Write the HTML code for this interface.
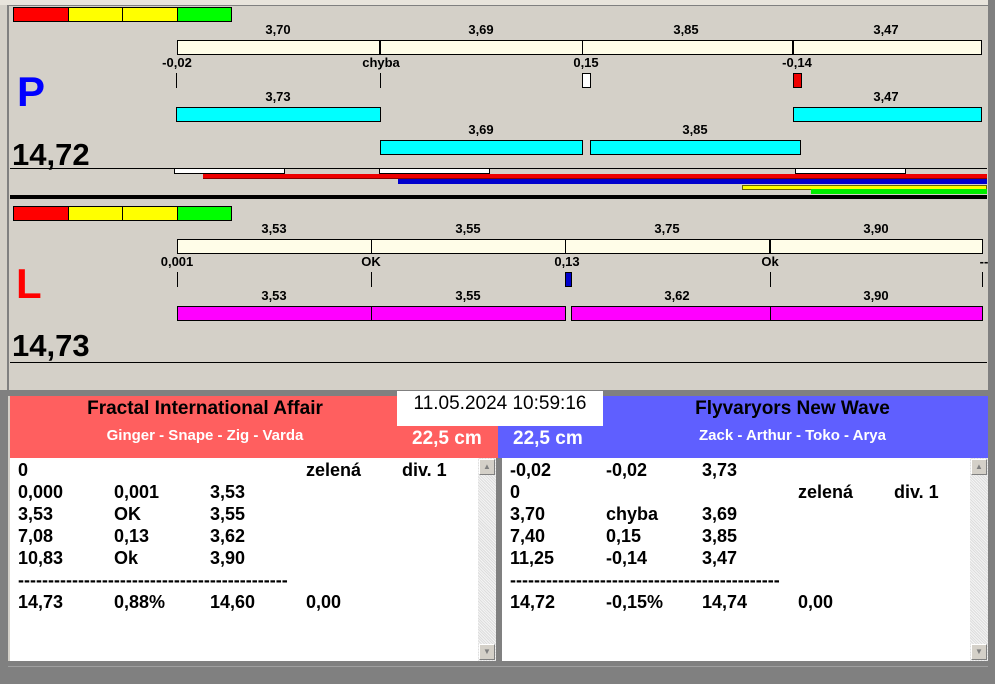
<!DOCTYPE html>
<html><head><meta charset="utf-8">
<style>
*{margin:0;padding:0;box-sizing:border-box}
body{width:995px;height:684px;position:relative;overflow:hidden;background:#d4d0c8;font-family:"Liberation Sans",Arial,sans-serif;font-weight:bold}
.a{position:absolute}
.b{position:absolute;border:1px solid #000}
.t{position:absolute;font-size:13px;color:#000;transform:translateX(-50%);white-space:nowrap;line-height:14px}
.lst{position:absolute;background:#fff;font-size:18px;line-height:22px;color:#000}
.lst div{position:absolute;white-space:nowrap}
.sb{position:absolute;width:18px;background:#e8e8e8;background-image:repeating-linear-gradient(45deg,#ddd 0 1px,#f4f4f4 1px 2px)}
.sbt{position:absolute;left:1px;width:16px;height:16px;background:#d4d0c8;border:1px solid;border-color:#fff #808080 #808080 #fff;font-size:8px;color:#808080;text-align:center;line-height:14px}
</style></head><body>
<div class="a" style="left:0;top:0;width:995px;height:5px;background:#e8e4dc"></div>
<div class="a" style="left:7px;top:5px;width:2px;height:385px;background:#808080"></div>
<div class="a" style="left:7px;top:5px;width:981px;height:1px;background:#808080"></div>
<div class="a" style="left:988px;top:0;width:7px;height:684px;background:#808080"></div>

<div class="b" style="left:13px;top:7px;width:56px;height:15px;background:#f00"></div>
<div class="b" style="left:68px;top:7px;width:55px;height:15px;background:#ff0"></div>
<div class="b" style="left:122px;top:7px;width:56px;height:15px;background:#ff0"></div>
<div class="b" style="left:177px;top:7px;width:55px;height:15px;background:#0f0"></div>

<div class="t" style="left:278px;top:23px">3,70</div>
<div class="t" style="left:481px;top:23px">3,69</div>
<div class="t" style="left:686px;top:23px">3,85</div>
<div class="t" style="left:886px;top:23px">3,47</div>
<div class="b" style="left:177px;top:40px;width:805px;height:15px;background:#fffde8"></div>
<div class="a" style="left:379px;top:40px;width:2px;height:15px;background:#000"></div>
<div class="a" style="left:582px;top:40px;width:1px;height:15px;background:#000"></div>
<div class="a" style="left:792px;top:40px;width:2px;height:15px;background:#000"></div>
<div class="t" style="left:177px;top:56px">-0,02</div>
<div class="t" style="left:381px;top:56px">chyba</div>
<div class="t" style="left:586px;top:56px">0,15</div>
<div class="t" style="left:797px;top:56px">-0,14</div>
<div class="a" style="left:176px;top:73px;width:1px;height:15px;background:#000"></div>
<div class="a" style="left:380px;top:73px;width:1px;height:15px;background:#000"></div>
<div class="b" style="left:582px;top:73px;width:9px;height:15px;background:#fff"></div>
<div class="b" style="left:793px;top:73px;width:9px;height:15px;background:#e00"></div>
<div class="t" style="left:278px;top:90px">3,73</div>
<div class="t" style="left:886px;top:90px">3,47</div>
<div class="b" style="left:176px;top:107px;width:205px;height:15px;background:#0ff"></div>
<div class="b" style="left:793px;top:107px;width:189px;height:15px;background:#0ff"></div>
<div class="t" style="left:481px;top:123px">3,69</div>
<div class="t" style="left:695px;top:123px">3,85</div>
<div class="b" style="left:380px;top:140px;width:203px;height:15px;background:#0ff"></div>
<div class="b" style="left:590px;top:140px;width:211px;height:15px;background:#0ff"></div>
<div class="a" style="left:17px;top:70px;font-size:42px;line-height:44px;color:#00f">P</div>
<div class="a" style="left:12px;top:138px;font-size:31px;line-height:34px;color:#000">14,72</div>
<div class="a" style="left:10px;top:168px;width:977px;height:1px;background:#000"></div>
<div class="b" style="left:174px;top:168px;width:111px;height:6px;background:#fff"></div>
<div class="b" style="left:379px;top:168px;width:111px;height:6px;background:#fff"></div>
<div class="b" style="left:795px;top:168px;width:111px;height:6px;background:#fff"></div>
<div class="a" style="left:203px;top:174px;width:784px;height:5px;background:#e00;border-bottom:1px solid #800"></div>
<div class="a" style="left:398px;top:179px;width:589px;height:5px;background:#00c"></div>
<div class="a" style="left:742px;top:185px;width:245px;height:5px;background:#ff0;border:1px solid #660"></div>
<div class="a" style="left:811px;top:189px;width:176px;height:5px;background:#0e0"></div>
<div class="a" style="left:10px;top:195px;width:977px;height:4px;background:#000"></div>

<div class="b" style="left:13px;top:206px;width:56px;height:15px;background:#f00"></div>
<div class="b" style="left:68px;top:206px;width:55px;height:15px;background:#ff0"></div>
<div class="b" style="left:122px;top:206px;width:56px;height:15px;background:#ff0"></div>
<div class="b" style="left:177px;top:206px;width:55px;height:15px;background:#0f0"></div>
<div class="t" style="left:274px;top:222px">3,53</div>
<div class="t" style="left:468px;top:222px">3,55</div>
<div class="t" style="left:667px;top:222px">3,75</div>
<div class="t" style="left:876px;top:222px">3,90</div>
<div class="b" style="left:177px;top:239px;width:806px;height:15px;background:#fffde8"></div>
<div class="a" style="left:371px;top:239px;width:1px;height:15px;background:#000"></div>
<div class="a" style="left:565px;top:239px;width:1px;height:15px;background:#000"></div>
<div class="a" style="left:769px;top:239px;width:2px;height:15px;background:#000"></div>
<div class="t" style="left:177px;top:255px">0,001</div>
<div class="t" style="left:371px;top:255px">OK</div>
<div class="t" style="left:567px;top:255px">0,13</div>
<div class="t" style="left:770px;top:255px">Ok</div>
<div class="t" style="left:984px;top:255px">--</div>
<div class="a" style="left:177px;top:272px;width:1px;height:15px;background:#000"></div>
<div class="a" style="left:371px;top:272px;width:1px;height:15px;background:#000"></div>
<div class="a" style="left:770px;top:272px;width:1px;height:15px;background:#000"></div>
<div class="a" style="left:982px;top:272px;width:1px;height:15px;background:#000"></div>
<div class="b" style="left:565px;top:272px;width:7px;height:15px;background:#00c"></div>
<div class="t" style="left:274px;top:289px">3,53</div>
<div class="t" style="left:468px;top:289px">3,55</div>
<div class="t" style="left:677px;top:289px">3,62</div>
<div class="t" style="left:876px;top:289px">3,90</div>
<div class="b" style="left:177px;top:306px;width:389px;height:15px;background:#f0f"></div>
<div class="a" style="left:371px;top:306px;width:1px;height:15px;background:#000"></div>
<div class="b" style="left:571px;top:306px;width:412px;height:15px;background:#f0f"></div>
<div class="a" style="left:770px;top:306px;width:1px;height:15px;background:#000"></div>
<div class="a" style="left:16px;top:262px;font-size:42px;line-height:44px;color:#f00">L</div>
<div class="a" style="left:12px;top:329px;font-size:31px;line-height:34px;color:#000">14,73</div>
<div class="a" style="left:10px;top:362px;width:977px;height:1px;background:#000"></div>

<div class="a" style="left:0;top:390px;width:995px;height:6px;background:#808080"></div>
<div class="a" style="left:0;top:390px;width:8px;height:294px;background:#808080"></div>

<div class="a" style="left:10px;top:396px;width:488px;height:62px;background:#ff5f5f"></div>
<div class="a" style="left:498px;top:396px;width:490px;height:62px;background:#5f5fff"></div>
<div class="a" style="left:10px;top:397px;width:390px;text-align:center;font-size:19px;line-height:24px;color:#000">Fractal International Affair</div>
<div class="a" style="left:10px;top:427px;width:390px;text-align:center;font-size:15px;line-height:18px;color:#fff">Ginger - Snape - Zig - Varda</div>
<div class="a" style="left:600px;top:397px;width:385px;text-align:center;font-size:19px;line-height:24px;color:#000">Flyvaryors New Wave</div>
<div class="a" style="left:600px;top:427px;width:385px;text-align:center;font-size:15px;line-height:18px;color:#fff">Zack - Arthur - Toko - Arya</div>
<div class="a" style="left:397px;top:391px;width:206px;height:35px;background:#fff;font-weight:normal;font-size:19px;line-height:26px;text-align:center;color:#000">11.05.2024 10:59:16</div>
<div class="a" style="left:412px;top:428px;font-size:19px;line-height:22px;color:#fff">22,5 cm</div>
<div class="a" style="left:513px;top:428px;font-size:19px;line-height:22px;color:#fff">22,5 cm</div>

<div class="lst" style="left:10px;top:458px;width:468px;height:203px">
<div style="left:8px;top:1px">0</div><div style="left:296px;top:1px">zelená</div><div style="left:392px;top:1px">div. 1</div>
<div style="left:8px;top:23px">0,000</div><div style="left:104px;top:23px">0,001</div><div style="left:200px;top:23px">3,53</div>
<div style="left:8px;top:45px">3,53</div><div style="left:104px;top:45px">OK</div><div style="left:200px;top:45px">3,55</div>
<div style="left:8px;top:67px">7,08</div><div style="left:104px;top:67px">0,13</div><div style="left:200px;top:67px">3,62</div>
<div style="left:8px;top:89px">10,83</div><div style="left:104px;top:89px">Ok</div><div style="left:200px;top:89px">3,90</div>
<div style="left:8px;top:111px">---------------------------------------------</div>
<div style="left:8px;top:133px">14,73</div><div style="left:104px;top:133px">0,88%</div><div style="left:200px;top:133px">14,60</div><div style="left:296px;top:133px">0,00</div>
</div>
<div class="sb" style="left:478px;top:458px;height:203px"><div class="sbt" style="top:1px">▲</div><div class="sbt" style="bottom:1px">▼</div></div>
<div class="a" style="left:496px;top:458px;width:6px;height:204px;background:#808080"></div>
<div class="lst" style="left:502px;top:458px;width:468px;height:203px">
<div style="left:8px;top:1px">-0,02</div><div style="left:104px;top:1px">-0,02</div><div style="left:200px;top:1px">3,73</div>
<div style="left:8px;top:23px">0</div><div style="left:296px;top:23px">zelená</div><div style="left:392px;top:23px">div. 1</div>
<div style="left:8px;top:45px">3,70</div><div style="left:104px;top:45px">chyba</div><div style="left:200px;top:45px">3,69</div>
<div style="left:8px;top:67px">7,40</div><div style="left:104px;top:67px">0,15</div><div style="left:200px;top:67px">3,85</div>
<div style="left:8px;top:89px">11,25</div><div style="left:104px;top:89px">-0,14</div><div style="left:200px;top:89px">3,47</div>
<div style="left:8px;top:111px">---------------------------------------------</div>
<div style="left:8px;top:133px">14,72</div><div style="left:104px;top:133px">-0,15%</div><div style="left:200px;top:133px">14,74</div><div style="left:296px;top:133px">0,00</div>
</div>
<div class="sb" style="left:970px;top:458px;height:203px"><div class="sbt" style="top:1px">▲</div><div class="sbt" style="bottom:1px">▼</div></div>

<div class="a" style="left:0;top:661px;width:995px;height:23px;background:#808080"></div>
<div class="a" style="left:8px;top:666px;width:980px;height:1px;background:#a0a0a0"></div>
</body></html>
